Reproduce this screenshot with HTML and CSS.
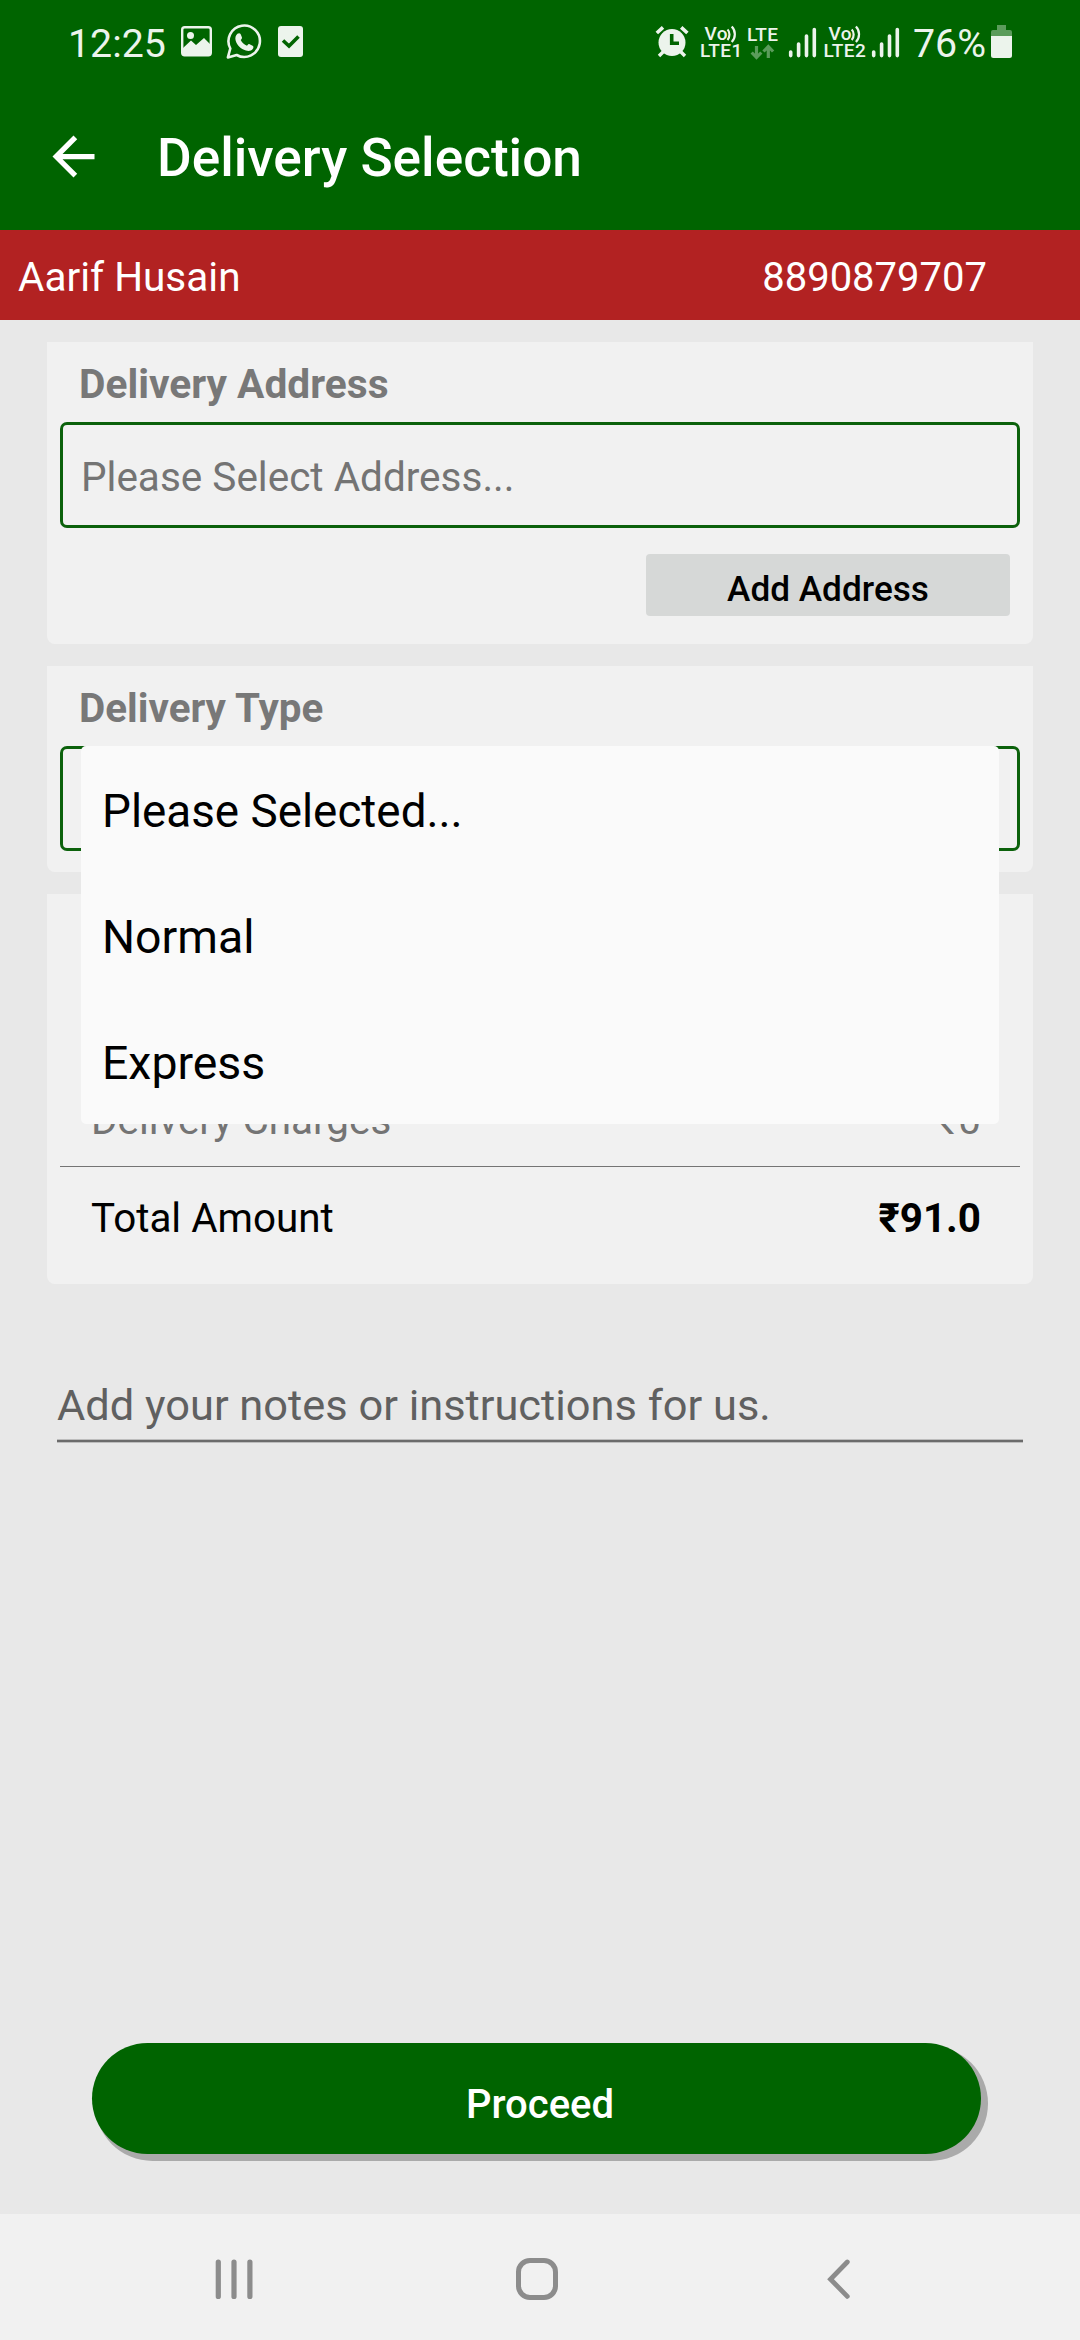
FILE: index.html
```html
<!DOCTYPE html>
<html lang="en">
<head>
<meta charset="utf-8">
<title>Delivery Selection</title>
<link rel="stylesheet" href="styles.css">
</head>
<body>
<div class="screen">
  <header class="header">
    <div class="status">
      <span class="clock">12:25</span>
      <svg class="notices" width="124" height="40" viewBox="180 22 124 40">
        <rect x="182.2" y="27.2" width="28.600" height="28" rx="2.5" fill="none" stroke="#ecf4ec" stroke-width="2.4"/>
        <circle cx="190.5" cy="35.5" r="3.5" fill="#ecf4ec"/>
        <path d="M183 48l8-7.5 5 4.5 8-7 7 7v10h-28z" fill="#ecf4ec"/>
        <path d="M230.300 48.500A15.700 15.700 0 1 1 236.700 55L227.900 57.400z" fill="none" stroke="#ecf4ec" stroke-width="2.6" stroke-linejoin="round"/>
        <path d="M237.400 33.800c1.200-1 2.800-.8 3.300.4l1.200 3c.3.900-.1 1.500-1.200 2.800 1.500 2.700 3.500 4.600 6.300 5.800 1.100-1.300 1.600-2 2.600-1.600l3 1.500c1.100.6 1 1.900.3 3.100-1.400 2.200-4.300 2.700-7 1.800-5.200-1.700-8.700-5.300-10.200-9.800-.8-2.700-.2-5.400 1.700-7z" fill="#ecf4ec"/>
        <rect x="278" y="26" width="25" height="31" rx="3" fill="#ecf4ec"/>
        <path d="M283 40.5l6 5.500 9.500-9.500" fill="none" stroke="#006400" stroke-width="3.6"/>
      </svg>
      <svg class="network" width="254" height="40" viewBox="654 22 254 40">
        <g fill="none" stroke="#ecf4ec">
          <path d="M656.800 33l6.200-5.700M681.200 27.300l6.200 5.700" stroke-width="3.6"/>
          <path d="M663.500 51.500l-4.500 4.500M680.500 51.500l4.500 4.500" stroke-width="3.4"/>
        </g>
        <circle cx="672" cy="42.5" r="13.5" fill="#ecf4ec"/>
        <path d="M671.700 34v9.300h7.300" fill="none" stroke="#006400" stroke-width="3.6"/>
        <g class="tech">
          <text x="704.5" y="40">Vo</text>
          <text x="700" y="57">LTE1</text>
          <text x="747" y="40.5">LTE</text>
          <text x="828.5" y="40">Vo</text>
          <text x="823.500" y="57">LTE2</text>
        </g>
        <g fill="none" stroke="#ecf4ec" stroke-width="2.2">
          <path d="M727.500 29.500c2.600 2.500 2.600 7.500 0 10.500M731.700 26.500c4.200 4.300 4.200 11 0 15.500"/>
          <path d="M851.700 29.500c2.600 2.500 2.600 7.500 0 10.500M855.900 26.500c4.200 4.300 4.200 11 0 15.500"/>
        </g>
        <path d="M756.500 46v11M751.700 52.500l4.800 5 4.800-5M768.300 58v-11M763.500 51.500l4.800-5 4.800 5" fill="none" stroke="#5b9c5b" stroke-width="3.2"/>
        <g fill="none" stroke="#ecf4ec" stroke-width="3.6" stroke-linecap="round">
          <path d="M790.700 52v3.600M798.600 44v11.600M806.500 36v19.600M814.300 29.500v26.100"/>
          <path d="M873.700 52v3.600M881.600 44v11.600M889.500 36v19.600M897.300 29.500v26.100"/>
        </g>
      </svg>
      <span class="charge">76%</span>
      <svg class="battery" width="21" height="34" viewBox="0 0 21 34">
        <path d="M6 0h9v5h4a2 2 0 0 1 2 2v4h-21v-4a2 2 0 0 1 2-2h4z" fill="#5b9c5b"/>
        <path d="M0 11h21v19.500a2.500 2.500 0 0 1-2.500 2.500h-16a2.500 2.500 0 0 1-2.500-2.500z" fill="#ecf4ec"/>
      </svg>
    </div>
    <div class="titlebar">
      <svg class="arrow" width="63" height="63" viewBox="0 0 24 24"><path d="M20 11H7.830l5.590-5.590L12 4l-8 8 8 8 1.410-1.410L7.830 13H20v-2z" fill="#fff"/></svg>
      <h1 class="title">Delivery Selection</h1>
    </div>
  </header>

  <div class="customer">
    <span class="name">Aarif Husain</span>
    <span class="phone">8890879707</span>
  </div>

  <main class="content">
    <section class="card">
      <h2 class="label label-address">Delivery Address</h2>
      <div class="select">Please Select Address...</div>
      <div class="add-button">Add Address</div>
    </section>

    <section class="card card-type">
      <h2 class="label">Delivery Type</h2>
      <div class="select select-type">
        <ul class="dropdown">
          <li class="option option-hint">Please Selected...</li>
          <li class="option">Normal</li>
          <li class="option">Express</li>
        </ul>
      </div>
    </section>

    <section class="card card-amounts">
      <div class="row row-charges"><span>Delivery Charges</span><span>₹0</span></div>
      <div class="row row-total"><span>Total Amount</span><strong>₹91.0</strong></div>
    </section>

    <div class="notes">Add your notes or instructions for us.</div>

    <div class="proceed">Proceed</div>
  </main>

  <nav class="navbar">
    <svg class="nav-icon" width="44" height="44" viewBox="0 0 44 44"><path d="M6.300 5v34.500M22 5v34.500M37.900 5v34.500" stroke="#8c8c8c" stroke-width="5.2" stroke-linecap="round"/></svg>
    <svg class="nav-icon" width="44" height="44" viewBox="0 0 44 44"><rect x="3.5" y="3.5" width="37" height="37" rx="11.5" fill="none" stroke="#8c8c8c" stroke-width="5"/></svg>
    <svg class="nav-icon" width="44" height="44" viewBox="0 0 44 44"><path d="M30.300 5L13.500 22.200l16.800 17.200" fill="none" stroke="#8c8c8c" stroke-width="4.8" stroke-linecap="round"/></svg>
  </nav>
</div>
</body>
</html>
```
FILE: styles.css
```css
* { box-sizing: border-box; margin: 0; padding: 0; }

body {
  font-family: Roboto, sans-serif;
  background: #e8e8e8;
  color: #000;
}

.screen {
  width: 1080px;
  height: 2340px;
  display: flex;
  flex-direction: column;
  overflow: hidden;
}

.header { height: 230px; background: #006400; color: #fff; }

.status {
  display: flex;
  height: 82px;
  padding: 0 68px;
  line-height: 88px;
  font-size: 39.3px;
  color: #ecf4ec;
}
.status svg { display: block; flex: none; margin-top: 22px; }
.clock { width: 112px; }
.network { margin-left: 350px; }
.charge { width: 83px; padding-left: 5px; }
.status .battery { margin-top: 25px; }
.tech { font-size: 19px; font-weight: 500; letter-spacing: 0.4px; fill: #ecf4ec; }

.titlebar { display: flex; height: 148px; padding-left: 42px; }
.arrow { margin: 43px 52px 0 0; }
.title { font-size: 53.2px; font-weight: 500; line-height: 153.6px; }

.customer {
  display: flex;
  justify-content: space-between;
  height: 90px;
  padding: 0 93px 0 18px;
  line-height: 95px;
  font-size: 40px;
  color: #fff;
  background: #b22222;
}
.name { font-size: 40.5px; }
.phone { line-height: 96px; }

.content {
  flex: 1;
  display: flex;
  flex-direction: column;
  gap: 22px;
  padding: 22px 47px 60px;
}

.card {
  height: 302px;
  padding: 0 13px;
  background: #f1f1f1;
  border-radius: 0 0 8px 8px;
}
.card-type { height: 206px; }
.card-amounts { height: 390px; padding-top: 180px; }

.label {
  height: 80px;
  padding-left: 19px;
  font-size: 40.4px;
  font-weight: 700;
  line-height: 86px;
  color: #787878;
}
.label-address { font-size: 40.7px; line-height: 84px; }

.select {
  height: 106px;
  padding-left: 18px;
  border: 3px solid #0b610b;
  border-radius: 7px;
  font-size: 40.5px;
  line-height: 104px;
  color: #747474;
}
.select-type { position: relative; height: 105px; }

.add-button {
  width: 364px;
  height: 62px;
  margin: 26px 10px 0 auto;
  border-radius: 4px;
  background: #d6d8d7;
  font-size: 35.2px;
  font-weight: 500;
  line-height: 70px;
  text-align: center;
}

/* Popup list laid over the delivery type field and the card below it */
.dropdown {
  position: absolute;
  top: -3px;
  left: 18px;
  z-index: 1;
  width: 918px;
  list-style: none;
  background: #fafafa;
  border-radius: 5px;
  color: #000;
}
.option {
  height: 126px;
  padding-left: 21px;
  font-size: 46.4px;
  line-height: 131px;
}
.option-hint { font-size: 45.8px; }

.row {
  display: flex;
  justify-content: space-between;
  font-size: 40.4px;
  padding: 0 39px 0 31px;
}
.row-charges {
  height: 93px;
  line-height: 94px;
  border-bottom: 1px solid #747474;
  color: #747474;
}
.row-total { line-height: 103px; }

.notes {
  height: 84px;
  margin: 53px 10px 0;
  padding-top: 17px;
  font-size: 43.4px;
  line-height: 60px;
  color: #606060;
  background: linear-gradient(#bdbdbd 1px, #6b6b6b 1px, #6b6b6b 3px, #bdbdbd 3px) bottom / 100% 4px no-repeat;
}

.proceed {
  width: 889px;
  height: 111px;
  margin: auto 0 0 45px;
  padding-left: 7px;
  border-radius: 56px;
  background: #006400;
  box-shadow: 5px 5px 0 2px #aaa;
  color: #fff;
  font-size: 40px;
  font-weight: 500;
  line-height: 124px;
  text-align: center;
}

.navbar {
  display: flex;
  align-items: center;
  justify-content: space-between;
  height: 126px;
  padding: 0 219px 0 212px;
  background: #f1f1f1;
}
.nav-icon { display: block; margin-top: 4px; }
```
